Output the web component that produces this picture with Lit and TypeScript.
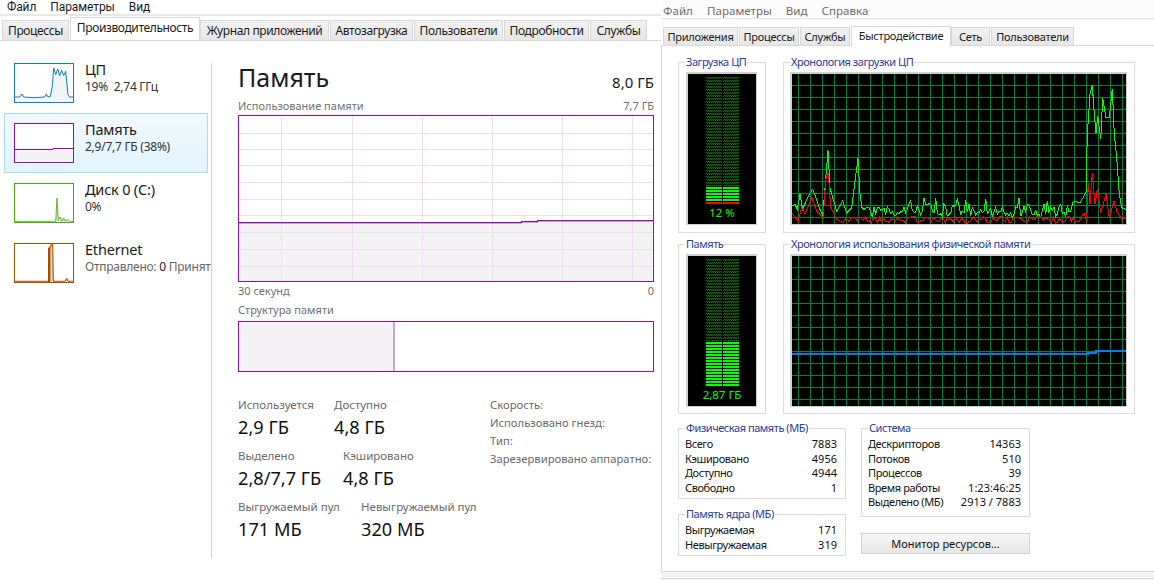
import { LitElement, html, css, svg } from "lit";
import { customElement } from "lit/decorators.js";

function seq(seed: number) {
  let s = seed;
  return () => {
    s = (s * 1103515245 + 12345) & 0x7fffffff;
    return (s >> 8) % 1000 / 1000;
  };
}

function cpuGreen(): number[][] {
  const p = [[396,615],[405,610],[412,625],[420,580],[428,625],[438,600],[448,580],[458,565],[468,590],[478,620],[488,645],[495,560],[504,448],[510,560],[518,590],[530,630],[548,600],[560,635],[575,620],[585,540],[594,472],[600,580],[606,620]];
  const r = seq(7);
  for (let x = 612; x < 1236; x += 5) {
    const v = r();
    p.push([x, v > 0.93 ? 590 + r() * 12 : 608 + r() * 42]);
  }
  p.push([1240,600],[1260,605],[1278,575],[1282,400],[1290,280],[1297,253],[1303,340],[1308,395],[1313,345],[1322,415],[1328,290],[1338,350],[1348,350],[1357,263],[1363,400],[1370,470],[1378,580],[1385,620],[1397,625]);
  return p;
}
function cpuRed(): number[][] {
  const p = [[396,635],[405,650],[415,660],[425,620],[435,640],[455,590],[470,630],[490,650],[497,535],[505,515],[512,620],[530,655],[550,665]];
  const r = seq(23);
  for (let x = 556; x < 1266; x += 6) {
    p.push([x, 645 + r() * 22]);
  }
  p.push([1272,635],[1280,660],[1285,545],[1290,610],[1297,515],[1305,610],[1312,565],[1322,635],[1338,580],[1348,650],[1362,600],[1370,630],[1385,655],[1397,650]);
  return p;
}
const toLocal = (p: number[][]) => p.map(([x, y]) => `${(x / 3 - 132).toFixed(1)},${(y / 3 - 73).toFixed(1)}`).join(" ");
const thumb = (p: number[][], ox: number, oy: number) => p.map(([x, y]) => `${((x - ox) / 3).toFixed(1)},${((y - oy) / 3).toFixed(1)}`).join(" ");

function grid() {
  const out = [];
  for (let x = 6.5; x < 334; x += 12) out.push(svg`<line x1=${x} x2=${x} y1="0" y2="150" />`);
  for (let y = 11.5; y < 150; y += 12) out.push(svg`<line x1="0" x2="334" y1=${y} y2=${y} />`);
  return svg`<g stroke="#008040" stroke-width="1">${out}</g>`;
}

function meter(id: string, lit: number, red: number) {
  const rows = [];
  for (let i = 0; i < lit; i++) {
    const y = 125 - i * 3;
    const c = i < red ? "#ff0000" : "#00ff00";
    rows.push(svg`<rect x="0" y=${y} width="16" height="2" fill=${c} /><rect x="17" y=${y} width="16" height="2" fill=${c} />`);
  }
  const h = 127 - lit * 3;
  return html`<svg class="led" width="33" height="127" viewBox="0 0 33 127" shape-rendering="crispEdges">
    <defs>${svg`<pattern id=${id} width="2" height="3" patternUnits="userSpaceOnUse">
      <rect x="0" y="0" width="1" height="1" fill="#007400" /><rect x="1" y="1" width="1" height="1" fill="#007400" />
      <rect x="0" y="1" width="1" height="1" fill="#002000" /><rect x="1" y="0" width="1" height="1" fill="#002000" />
    </pattern>`}</defs>
    ${svg`<rect x="0" y="0" width="16" height=${h} fill="url(#${id})" /><rect x="17" y="0" width="16" height=${h} fill="url(#${id})" />`}
    ${rows}
  </svg>`;
}

@customElement("app-root")
export class AppRoot extends LitElement {
  static styles = css`
    :host { display: flex; width: 1154px; height: 580px; overflow: hidden; background: #fff; font-family: "Noto Sans", sans-serif; color: #1a1a1a; }
    .left { width: 661px; flex: none; display: flex; flex-direction: column; font-size: 12px; letter-spacing: -0.25px; }
    .menu { display: flex; height: 14px; align-items: center; border-bottom: 2px solid #e8e8e8; padding-left: 7px; gap: 14px; font-family: Roboto, sans-serif; font-size: 12px; letter-spacing: -0.1px; line-height: 14px; }
    .ltabs { display: flex; align-items: flex-end; height: 25px; padding-left: 2px; border-bottom: 1px solid #d9d9d9; box-sizing: border-box; }
    .tab { display: flex; align-items: center; justify-content: center; box-sizing: border-box; background: linear-gradient(#f2f2f2, #e6e6e6); border: 1px solid #d9d9d9; border-bottom: none; white-space: nowrap; }
    .ltabs .tab { height: 20px; margin-right: 1px; letter-spacing: -0.38px; }
    .ltabs .sel { height: 23px; background: #fff; padding-bottom: 4px; margin-right: 0; }
    .body { display: flex; flex: 1; min-height: 0; }
    .side { width: 211px; flex: none; overflow: hidden; padding-top: 12px; box-sizing: border-box; }
    .item { display: flex; width: 204px; height: 60px; margin-left: 4px; box-sizing: border-box; padding: 9px 0 0 9px; gap: 11px; border: 1px solid transparent; white-space: nowrap; }
    .item.on { background: linear-gradient(#f1f9fd, #e1f4fd); border-color: #a9dcef; }
    .thumb { flex: none; width: 60px; height: 40px; display: block; }
    .name { font-size: 14.5px; line-height: 18px; margin-top: -3px; letter-spacing: -0.2px; }
    .sub { line-height: 16px; margin-top: 1px; color: #333; }
    .sub.g { color: #666; }
    .sub b { font-weight: 400; color: #222; }
    .divider { width: 1px; background: #d4d4d4; margin: 22px 0; flex: none; }
    .main { width: 416px; margin-left: 26px; flex: none; }
    .head { display: flex; justify-content: space-between; align-items: flex-end; height: 57px; }
    .title { font-size: 25px; line-height: 34px; letter-spacing: 0; margin-bottom: 4px; }
    .total { font-size: 15px; line-height: 20px; margin-bottom: 6px; letter-spacing: 0; }
    .cap { display: flex; justify-content: space-between; font-size: 11px; line-height: 16px; color: #707070; letter-spacing: 0; }
    .cap.top { height: 17px; }
    .chart { display: block; width: 416px; height: 167px; }
    .caps2 { margin-top: 1px; }
    .struct-cap { margin-top: 3px; }
    .struct { display: flex; height: 51px; box-sizing: border-box; border: 1px solid #8b12ae; margin-top: 3px; }
    .struct .used { width: 154px; background: #f4f2f4; border-right: 2px solid #c9a8d8; }
    .stats { display: flex; margin-top: 25px; }
    .nums { width: 252px; flex: none; }
    .row { display: grid; height: 51px; }
    .r1 { grid-template-columns: 96px auto; }
    .r2 { grid-template-columns: 105px auto; }
    .r3 { grid-template-columns: 123px auto; }
    .lab { font-size: 11.5px; line-height: 16px; color: #6a6a6a; white-space: nowrap; letter-spacing: 0; }
    .val { font-size: 18.2px; line-height: 24px; margin-top: 2px; white-space: nowrap; letter-spacing: 0; color: #111; }
    .facts { display: flex; flex-direction: column; margin-top: -1px; }
    .facts .lab { line-height: 18px; font-size: 11.25px; }

    .right { width: 493px; flex: none; display: flex; flex-direction: column; font-size: 11px; background: #f6f6f6; }
    .rmenu { display: flex; height: 19px; padding: 2px 0 0 2px; gap: 14px; align-items: center; box-sizing: border-box; background: #fcfcfc; border-bottom: 1px solid #e4e4e4; color: #6d6d6d; font-size: 11.6px; }
    .rtabs { display: flex; align-items: flex-end; height: 26px; padding-left: 2px; background: #fff; box-sizing: border-box; }
    .rtabs .tab { height: 18px; margin-right: 1px; letter-spacing: -0.25px; }
    .rtabs .sel { height: 20px; background: #fff; margin-right: 0; padding-bottom: 3px; margin-bottom: -1px; position: relative; }
    .content { height: 527px; box-sizing: border-box; background: #fff; border: 1px solid #d9d9d9; border-width: 1px 0 1px 1px; padding: 16px 0 0 16px; }
    .graphs { display: grid; grid-template-columns: 88px 352px; grid-template-rows: 171px 170px; column-gap: 17px; row-gap: 11px; }
    .group { position: relative; border: 1px solid #dcdcdc; box-sizing: border-box; }
    .legend { position: absolute; top: -8px; left: 6px; padding: 0 1px; background: #fff; color: #2c3a9c; line-height: 14px; white-space: nowrap; letter-spacing: -0.45px; }
    .mbox { margin: 9px 0 0 7px; width: 71px; height: 153px; box-sizing: border-box; background: #000; border: solid #d0d0d0; border-width: 2px 1px 1px 2px; display: flex; flex-direction: column; align-items: center; padding-top: 3px; }
    .led { display: block; flex: none; }
    .mval { color: #00ff00; font-size: 11.5px; line-height: 14px; margin-top: 2px; }
    .gbox { margin: 9px 0 0 6px; width: 337px; height: 153px; box-sizing: border-box; background: #000; border: solid #d0d0d0; border-width: 2px 1px 1px 2px; }
    .gbox svg { display: block; }
    .lower { display: grid; grid-template-columns: 168px 169px; column-gap: 15px; margin-top: 14px; }
    .colm { display: flex; flex-direction: column; }
    .list { padding: 8px 8px 0 6px; }
    .kv { display: flex; justify-content: space-between; line-height: 14.5px; color: #111; white-space: nowrap; }
    .kv span:first-child { letter-spacing: -0.4px; }
    .phys { height: 71px; }
    .kern { height: 42px; margin-top: 15px; }
    .sys { height: 89px; }
    .btn { height: 21px; margin-top: 16px; display: flex; align-items: center; justify-content: center; box-sizing: border-box; border: 1px solid #d4d4d4; background: linear-gradient(#f7f7f7, #e6e6e6); color: #111; }
    .foot { height: 7px; background: #f4f4f4; border-bottom: 1px solid #d9d9d9; box-sizing: border-box; }
  `;

  render() {
    const ltabs = [["Процессы",67],["Производительность",130,1],["Журнал приложений",129],["Автозагрузка",83],["Пользователи",89],["Подробности",85],["Службы",57]];
    const rtabs = [["Приложения",75],["Процессы",60],["Службы",50],["Быстродействие",100,1],["Сеть",39],["Пользователи",83]];
    const cpuT = [[43,292],[60,292],[67,283],[72,292],[105,294],[135,292],[140,283],[145,292],[152,290],[158,260],[162,205],[168,225],[174,208],[180,228],[186,212],[192,228],[198,215],[205,285],[210,292],[220,292]];
    const diskT = [[43,665],[168,665],[172,595],[176,660],[182,652],[187,665],[192,655],[197,665],[204,660],[210,665],[220,665]];
    const ethT = [[43,845],[147,845],[149,742],[153,742],[155,732],[159,732],[161,845],[196,845],[201,837],[206,845],[220,845]];
    const vx = [43, 114, 184, 254, 324, 394];
    const hy = [18, 34, 50, 67, 84, 100, 117, 134, 151];
    return html`
      <div class="left">
        <div class="menu"><span>Файл</span><span>Параметры</span><span>Вид</span></div>
        <div class="ltabs">${ltabs.map(([t, w, s]) => html`<div class="tab ${s ? "sel" : ""}" style="width:${w}px">${t}</div>`)}</div>
        <div class="body">
          <div class="side">
            <div class="item">
              <svg class="thumb" viewBox="0 0 60 40"><rect x=".5" y=".5" width="59" height="39" fill="#fff" stroke="#117dbb"/><polygon points="${thumb(cpuT,43,190)} 59,39 1,39" fill="#f1f6fa"/><polyline points=${thumb(cpuT,43,190)} fill="none" stroke="#117dbb"/><rect x=".5" y=".5" width="59" height="39" fill="none" stroke="#117dbb"/></svg>
              <div><div class="name">ЦП</div><div class="sub">19%&nbsp; 2,74 ГГц</div></div>
            </div>
            <div class="item on">
              <svg class="thumb" viewBox="0 0 60 40"><rect x=".5" y=".5" width="59" height="39" fill="#fff"/><rect x="1" y="26" width="58" height="13" fill="#f4f2f4"/><polyline points="1,26.5 39,26.5 39,25.5 59,25.5" fill="none" stroke="#8b12ae"/><rect x=".5" y=".5" width="59" height="39" fill="none" stroke="#8b12ae"/></svg>
              <div><div class="name">Память</div><div class="sub">2,9/7,7 ГБ (38%)</div></div>
            </div>
            <div class="item">
              <svg class="thumb" viewBox="0 0 60 40"><rect x=".5" y=".5" width="59" height="39" fill="#fff"/><polygon points=${thumb(diskT,43,550)} fill="#cfe6bd"/><polyline points=${thumb(diskT,43,550)} fill="none" stroke="#4da60c" stroke-width=".8"/><rect x=".5" y=".5" width="59" height="39" fill="none" stroke="#4da60c"/></svg>
              <div><div class="name">Диск 0 (C:)</div><div class="sub">0%</div></div>
            </div>
            <div class="item">
              <svg class="thumb" viewBox="0 0 60 40"><rect x=".5" y=".5" width="59" height="39" fill="#fff"/><polygon points=${thumb(ethT,43,730)} fill="#f0d3ba"/><polyline points=${thumb(ethT,43,730)} fill="none" stroke="#a74f01" stroke-width="1.1"/><rect x="34" y="5" width="2.4" height="34" fill="#a74f01"/><rect x=".5" y=".5" width="59" height="39" fill="none" stroke="#a74f01"/></svg>
              <div><div class="name">Ethernet</div><div class="sub g">Отправлено: <b>0</b> Принят</div></div>
            </div>
          </div>
          <div class="divider"></div>
          <div class="main">
            <div class="head"><div class="title">Память</div><div class="total">8,0 ГБ</div></div>
            <div class="cap top"><span>Использование памяти</span><span>7,7 ГБ</span></div>
            <svg class="chart" viewBox="0 0 416 167" shape-rendering="crispEdges">
              <rect width="416" height="167" fill="#fff"/>
              <polygon points="1,107 283,107 299,105 415,105 415,166 1,166" fill="#f4f2f4"/>
              <g stroke="#ecdff1">
                ${vx.map((x) => svg`<line x1=${x + 0.5} x2=${x + 0.5} y1="1" y2="166"/>`)}
                ${hy.map((y) => svg`<line x1="1" x2="415" y1=${y + 0.5} y2=${y + 0.5}/>`)}
              </g>
              <polyline points="1,108.5 283,108.5 283,107.5 299,107.5 299,106.5 415,106.5" fill="none" stroke="#c7a1d6"/>
              <polyline points="1,107.5 283,107.5 283,106.5 299,106.5 299,105.5 415,105.5" fill="none" stroke="#8b12ae"/>
              <rect x=".5" y=".5" width="415" height="166" fill="none" stroke="#8b12ae"/>
            </svg>
            <div class="cap caps2"><span>30 секунд</span><span>0</span></div>
            <div class="cap struct-cap"><span>Структура памяти</span></div>
            <div class="struct"><div class="used"></div></div>
            <div class="stats">
              <div class="nums">
                <div class="row r1"><div><div class="lab">Используется</div><div class="val">2,9 ГБ</div></div><div><div class="lab">Доступно</div><div class="val">4,8 ГБ</div></div></div>
                <div class="row r2"><div><div class="lab">Выделено</div><div class="val">2,8/7,7 ГБ</div></div><div><div class="lab">Кэшировано</div><div class="val">4,8 ГБ</div></div></div>
                <div class="row r3"><div><div class="lab">Выгружаемый пул</div><div class="val">171 МБ</div></div><div><div class="lab">Невыгружаемый пул</div><div class="val">320 МБ</div></div></div>
              </div>
              <div class="facts">
                <div class="lab">Скорость:</div>
                <div class="lab">Использовано гнезд:</div>
                <div class="lab">Тип:</div>
                <div class="lab">Зарезервировано аппаратно:</div>
              </div>
            </div>
          </div>
        </div>
      </div>
      <div class="right">
        <div class="rmenu"><span>Файл</span><span>Параметры</span><span>Вид</span><span>Справка</span></div>
        <div class="rtabs">${rtabs.map(([t, w, s]) => html`<div class="tab ${s ? "sel" : ""}" style="width:${w}px">${t}</div>`)}</div>
        <div class="content">
          <div class="graphs">
            <div class="group"><div class="legend">Загрузка ЦП</div><div class="mbox">${meter("m1", 6, 1)}<div class="mval">12 %</div></div></div>
            <div class="group"><div class="legend">Хронология загрузки ЦП</div><div class="gbox">
              <svg width="334" height="150" viewBox="0 0 334 150" shape-rendering="crispEdges">
                ${grid()}
                <polyline points=${toLocal(cpuGreen())} fill="none" stroke="#00ff00" stroke-width="1"/>
                <polyline points=${toLocal(cpuRed())} fill="none" stroke="#ff0000" stroke-width="1"/>
              </svg>
            </div></div>
            <div class="group"><div class="legend">Память</div><div class="mbox">${meter("m2", 15, 0)}<div class="mval">2,87 ГБ</div></div></div>
            <div class="group"><div class="legend">Хронология использования физической памяти</div><div class="gbox">
              <svg width="334" height="150" viewBox="0 0 334 150" shape-rendering="crispEdges">
                ${grid()}
                <polyline points="0,98 296,98 296,96.5 304,96.5 304,95 334,95" fill="none" stroke="#0a78ee" stroke-width="2"/>
              </svg>
            </div></div>
          </div>
          <div class="lower">
            <div class="colm">
              <div class="group list phys"><div class="legend">Физическая память (МБ)</div>
                <div class="kv"><span>Всего</span><span>7883</span></div>
                <div class="kv"><span>Кэшировано</span><span>4956</span></div>
                <div class="kv"><span>Доступно</span><span>4944</span></div>
                <div class="kv"><span>Свободно</span><span>1</span></div>
              </div>
              <div class="group list kern"><div class="legend">Память ядра (МБ)</div>
                <div class="kv"><span>Выгружаемая</span><span>171</span></div>
                <div class="kv"><span>Невыгружаемая</span><span>319</span></div>
              </div>
            </div>
            <div class="colm">
              <div class="group list sys"><div class="legend">Система</div>
                <div class="kv"><span>Дескрипторов</span><span>14363</span></div>
                <div class="kv"><span>Потоков</span><span>510</span></div>
                <div class="kv"><span>Процессов</span><span>39</span></div>
                <div class="kv"><span>Время работы</span><span>1:23:46:25</span></div>
                <div class="kv"><span>Выделено (МБ)</span><span>2913 / 7883</span></div>
              </div>
              <div class="btn">Монитор ресурсов...</div>
            </div>
          </div>
        </div>
        <div class="foot"></div>
      </div>
    `;
  }
}
